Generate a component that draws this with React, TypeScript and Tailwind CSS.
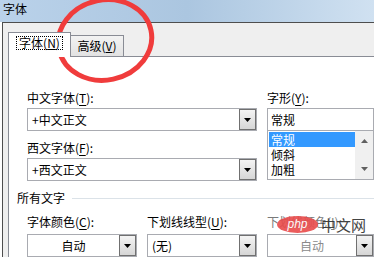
import React from 'react';

const font = "font-['Noto_Sans_CJK_SC','Microsoft_YaHei',sans-serif]";

function Arrow({ color = '#000' }: { color?: string }) {
  return (
    <svg width="7" height="4" viewBox="0 0 7 4">
      <path d="M0 0h7L3.5 4z" fill={color} />
    </svg>
  );
}

function Label({ text, k, rest = '):', disabled = false }: { text: string; k: string; rest?: string; disabled?: boolean }) {
  return (
    <div className={`h-[16px] leading-[16px] text-[12px] ${disabled ? 'text-[#7a7a7a]' : 'text-black'}`}>
      {text}(<span className="underline underline-offset-2">{k}</span>{rest}
    </div>
  );
}

interface ComboProps {
  value: string;
  center?: boolean;
  disabled?: boolean;
  className?: string;
}

function Combo({ value, center = false, disabled = false, className = '' }: ComboProps) {
  return (
    <div className={`flex h-[23px] border border-[#a9abb1] bg-white ${className}`}>
      <div
        className={`flex-1 flex items-center text-[12px] px-[4px] ${center ? 'justify-center' : ''} ${
          disabled ? 'text-[#8a8a8a]' : 'text-black'
        }`}
      >
        {value}
      </div>
      <div className="w-[17px] h-full border border-[#707070] bg-gradient-to-b from-[#f4f4f4] to-[#d6d6d6] flex items-center justify-center">
        <Arrow />
      </div>
    </div>
  );
}

export default function App() {
  return (
    <div className={`relative w-[377px] h-[257px] overflow-hidden bg-white ${font}`}>
      <div className="w-[374px] h-full flex flex-col">
        {/* Title bar */}
        <div className="h-[22px] bg-gradient-to-r from-[#bad2ea] via-[#abc6e0] to-[#d0e1f1] pl-[3px] text-[12px] leading-[18px] text-black">
          字体
        </div>

        {/* Dialog body */}
        <div className="flex-1 pl-[2px] flex flex-col">
          <div className="flex-1 border-l border-t border-[#4e4e4e] bg-[#efefef] pl-[5px] flex flex-col">
            {/* Tabs */}
            <div className="h-[33px] flex items-end">
              <div className="relative z-10 -mb-px w-[63px] h-[25px] bg-white border border-b-0 border-[#898c95] flex items-start justify-center pt-[3px]">
                <div className="border border-dotted border-black px-[2px] h-[14px] flex items-center text-[12px] leading-[12px]">
                  字体(<span className="underline">N</span>)
                </div>
              </div>
              <div className="w-[53px] h-[21px] border border-l-0 border-b-0 border-[#898c95] bg-gradient-to-b from-[#f3f3f3] to-[#e2e2e2] flex items-center justify-center text-[12px]">
                高级(<span className="underline">V</span>)
              </div>
            </div>

            {/* Tab page */}
            <div className="flex-1 bg-white border-l border-t border-[#898c95] pl-[18px] pt-[33px]">
              <div className="flex gap-[10px]">
                <div className="w-[230px] flex flex-col">
                  <Label text="中文字体" k="T" />
                  <Combo value="+中文正文" className="mt-[2px]" />
                  <div className="mt-[9px]">
                    <Label text="西文字体" k="F" />
                  </div>
                  <Combo value="+西文正文" className="mt-[2px]" />
                </div>
                <div className="w-[107px] flex flex-col">
                  <Label text="字形" k="Y" />
                  <div className="mt-[2px] h-[23px] border border-[#a9abb1] flex items-center px-[3px] text-[12px]">常规</div>
                  <div className="h-[49px] border border-t-0 border-[#a9abb1] flex">
                    <div className="flex-1 pt-[1px] pl-[1px] text-[12px]">
                      <div className="h-[15px] leading-[15px] bg-[#3399ff] text-white px-[2px]">常规</div>
                      <div className="h-[15px] leading-[15px] px-[2px]">倾斜</div>
                      <div className="h-[15px] leading-[15px] px-[2px]">加粗</div>
                    </div>
                    <div className="w-[18px] bg-[#f0f0f0] flex flex-col items-center justify-between py-[8px]">
                      <svg width="7" height="4" viewBox="0 0 7 4">
                        <path d="M0 4h7L3.5 0z" fill="#606060" />
                      </svg>
                      <Arrow color="#606060" />
                    </div>
                  </div>
                </div>
              </div>

              {/* 所有文字 */}
              <div className="mt-[9px] -ml-[10px] flex items-center h-[16px]">
                <span className="text-[12px] leading-[16px]">所有文字</span>
                <div className="flex-1 h-px bg-[#dbe2e8] ml-[7px]" />
              </div>

              <div className="mt-[8px] grid grid-cols-[110px_110px_107px] gap-x-[10px]">
                <Label text="字体颜色" k="C" />
                <Label text="下划线线型" k="U" />
                <Label text="下划线颜色" k="I" disabled />
                <Combo value="自动" center className="mt-[4px]" />
                <Combo value="(无)" className="mt-[4px]" />
                <Combo value="自动" center disabled className="mt-[4px]" />
              </div>
            </div>
          </div>
        </div>
      </div>

      {/* red annotation circle */}
      <svg className="absolute left-0 top-0 pointer-events-none" width="377" height="257">
        <ellipse cx="105" cy="40" rx="47" ry="40" fill="none" stroke="#f03c3c" strokeWidth="5" transform="rotate(-12 105 40)" />
      </svg>

      {/* watermark */}
      <div className="absolute left-[277px] top-[216px] flex items-center opacity-90 pointer-events-none">
        <div className="w-[41px] h-[17px] rounded-[50%] bg-[#e94b4b] text-white text-[12px] leading-[17px] text-center italic font-['Liberation_Sans',sans-serif]">
          php
        </div>
        <span className="ml-[3px] text-[15px] leading-[17px] text-[#2f2f2f]">中文网</span>
      </div>
    </div>
  );
}
